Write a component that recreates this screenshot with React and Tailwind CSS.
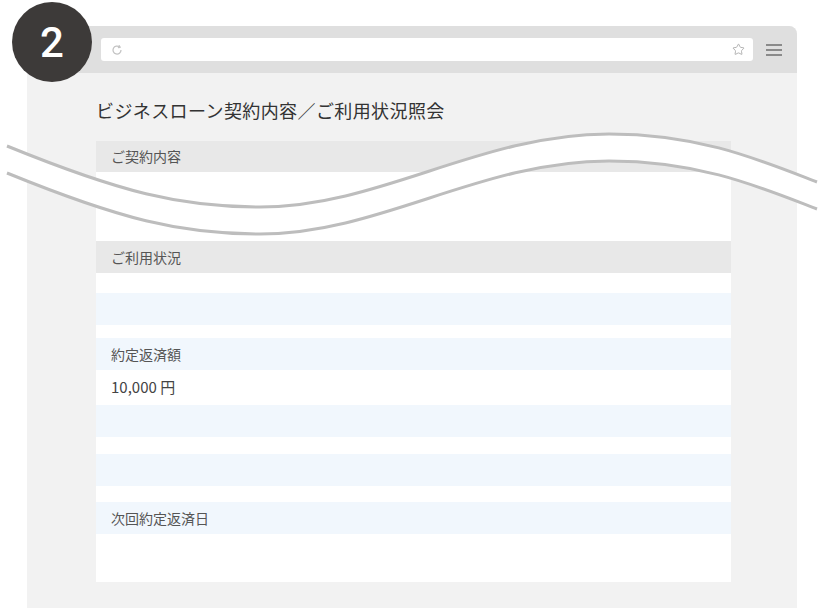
import { Star } from 'lucide-react';

const FONT = { fontFamily: '"Noto Sans CJK JP", "Noto Sans", sans-serif' };

function Wave() {
  const top = 'M7 146 C 120 192, 180 207, 260 207 C 380 207, 480 134, 609 134 C 700 134, 760 160, 817 182';
  const bottom = 'M7 173 C 120 219, 180 234, 260 234 C 380 234, 480 161, 609 161 C 700 161, 760 187, 817 209';
  const fill =
    top +
    ' L817 209 C 760 187, 700 161, 609 161 C 480 161, 380 234, 260 234 C 180 234, 120 219, 7 173 Z';
  return (
    <svg className="absolute left-0 top-0 pointer-events-none" width="824" height="608" viewBox="0 0 824 608">
      <path d={fill} fill="#ffffff" />
      <path d={top} fill="none" stroke="#bdbdbd" strokeWidth="3" />
      <path d={bottom} fill="none" stroke="#bdbdbd" strokeWidth="3" />
    </svg>
  );
}

function Refresh() {
  return (
    <svg width="12" height="12" viewBox="0 0 12 12" fill="none" stroke="#c4c4c4" strokeWidth="1.3">
      <path d="M10 6 A4 4 0 1 1 8.6 3" />
      <path d="M8 1.2 L9.2 3.3 L6.9 3.7" strokeLinejoin="round" />
    </svg>
  );
}

export default function App() {
  return (
    <div className="relative w-[824px] h-[608px] overflow-hidden bg-white" style={FONT}>
      <div className="pt-[26px] pl-[27px]">
        <div className="w-[770px] h-[582px] bg-[#f2f2f2] rounded-t-[8px] overflow-hidden">
          {/* browser bar */}
          <div className="h-[47px] bg-[#dfdfdf] flex items-center">
            <div className="ml-[74px] w-[652px] h-[23px] bg-white rounded-[3px] flex items-center justify-between px-[10px]">
              <Refresh />
              <Star size={13} color="#a8a8a8" strokeWidth={1.6} className="-mr-[2px]" />
            </div>
            <div className="ml-[13px] flex flex-col gap-[3px]">
              <div className="w-[16px] h-[2px] bg-[#8a8a8a]" />
              <div className="w-[16px] h-[2px] bg-[#8a8a8a]" />
              <div className="w-[16px] h-[2px] bg-[#8a8a8a]" />
            </div>
          </div>

          <div className="pl-[69px]">
            <div className="h-[68px] pt-[25px]">
              <h1 className="text-[18px] leading-[24px] text-[#333333] tracking-[0.4px]">
                ビジネスローン契約内容／ご利用状況照会
              </h1>
            </div>

            <div className="w-[635px] bg-white text-[#555555] text-[14px]">
              <div className="h-[31px] bg-[#e8e8e8] flex items-center pl-[15px]">ご契約内容</div>
              <div className="h-[69px]" />
              <div className="h-[32px] bg-[#e8e8e8] flex items-center pl-[15px]">ご利用状況</div>
              <div className="h-[20px]" />
              <div className="h-[32px] bg-[#f1f7fd]" />
              <div className="h-[13px]" />
              <div className="h-[32px] bg-[#f1f7fd] flex items-center pl-[15px]">約定返済額</div>
              <div className="h-[35px] flex items-center pl-[15px] text-[15px] text-[#444444]">10,000 円</div>
              <div className="h-[32px] bg-[#f1f7fd]" />
              <div className="h-[17px]" />
              <div className="h-[32px] bg-[#f1f7fd]" />
              <div className="h-[16px]" />
              <div className="h-[32px] bg-[#f1f7fd] flex items-center pl-[15px]">次回約定返済日</div>
              <div className="h-[48px]" />
            </div>
          </div>
        </div>
      </div>

      <Wave />

      {/* step badge */}
      <div
        className="absolute left-[12px] top-[2px] w-[80px] h-[80px] rounded-full bg-[#3d3a39] flex items-center justify-center text-white text-[42px] font-medium"
        style={{ fontFamily: 'Roboto, "Liberation Sans", sans-serif' }}
      >
        2
      </div>
    </div>
  );
}
